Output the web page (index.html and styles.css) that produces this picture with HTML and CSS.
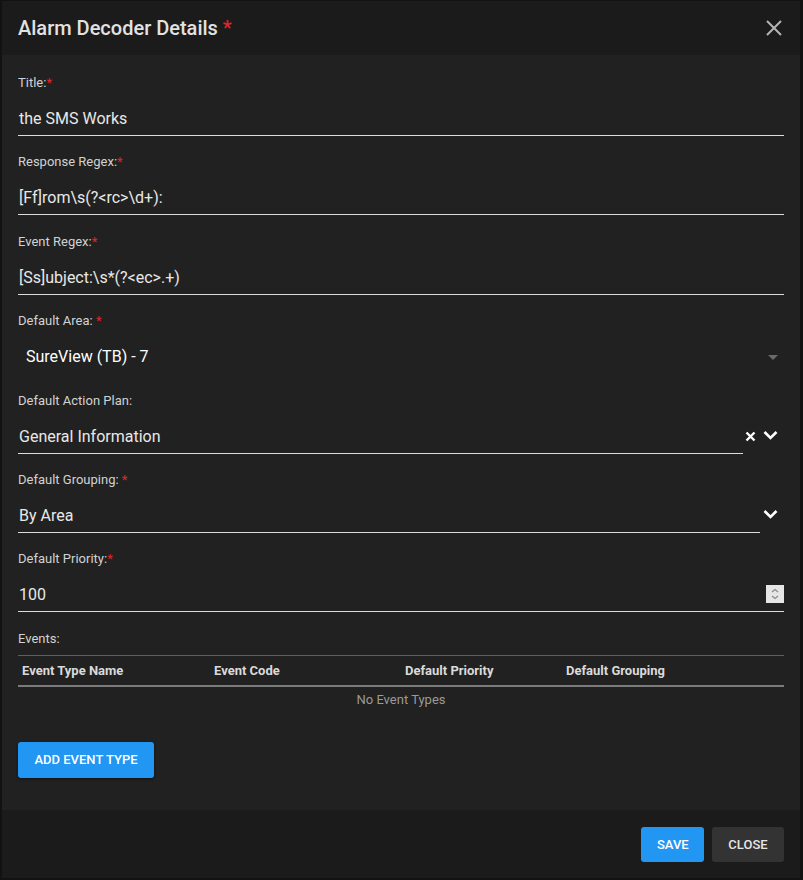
FILE: index.html
```html
<!DOCTYPE html>
<html>
<head>
<meta charset="utf-8">
<link rel="stylesheet" href="styles.css">
</head>
<body>
<div class="modal">
  <div class="header">
    <div class="title">Alarm Decoder Details <span class="req">*</span></div>
    <svg class="close-x" width="16" height="16" viewBox="0 0 16 16"><path d="M1 1L15 15M15 1L1 15" stroke="#b5b5b5" stroke-width="2" fill="none"/></svg>
  </div>
  <div class="body">
    <div class="field">
      <div class="label">Title:<span class="req">*</span></div>
      <div class="input"><span class="value">the SMS Works</span></div>
    </div>
    <div class="field">
      <div class="label">Response Regex:<span class="req">*</span></div>
      <div class="input"><span class="value">[Ff]rom\s(?&lt;rc&gt;\d+):</span></div>
    </div>
    <div class="field">
      <div class="label">Event Regex:<span class="req">*</span></div>
      <div class="input"><span class="value">[Ss]ubject:\s*(?&lt;ec&gt;.+)</span></div>
    </div>
    <div class="field">
      <div class="label">Default Area: <span class="req">*</span></div>
      <div class="input select-native"><span class="area">SureView (TB) - 7</span><span class="tri"></span></div>
    </div>
    <div class="field">
      <div class="label">Default Action Plan:</div>
      <div class="combo">
        <div class="input grow"><span class="value">General Information</span></div>
        <svg class="clear" width="11" height="11" viewBox="0 0 11 11"><path d="M1.5 1.5L9.5 9.5M9.5 1.5L1.5 9.5" stroke="#fff" stroke-width="2.4" fill="none"/></svg>
        <svg class="chev" width="15" height="10" viewBox="0 0 15 10"><path d="M1.5 2L7.5 8L13.5 2" stroke="#fff" stroke-width="2.6" fill="none"/></svg>
      </div>
    </div>
    <div class="field">
      <div class="label">Default Grouping: <span class="req">*</span></div>
      <div class="combo">
        <div class="input grow"><span class="value">By Area</span></div>
        <svg class="chev solo" width="15" height="10" viewBox="0 0 15 10"><path d="M1.5 2L7.5 8L13.5 2" stroke="#fff" stroke-width="2.6" fill="none"/></svg>
      </div>
    </div>
    <div class="field">
      <div class="label">Default Priority:<span class="req">*</span></div>
      <div class="input"><span class="value">100</span>
        <span class="spin"><svg width="18" height="18" viewBox="0 0 18 18"><path d="M6 7L9 4.5L12 7M6 11L9 13.5L12 11" stroke="#8a8a8a" stroke-width="1.2" fill="none"/></svg></span>
      </div>
    </div>
    <div class="label events-label">Events:</div>
    <div class="table">
      <div class="thead">
        <div class="th">Event Type Name</div>
        <div class="th">Event Code</div>
        <div class="th">Default Priority</div>
        <div class="th">Default Grouping</div>
      </div>
      <div class="empty">No Event Types</div>
    </div>
    <button class="btn primary add">ADD EVENT TYPE</button>
  </div>
  <div class="footer">
    <button class="btn primary">SAVE</button>
    <button class="btn dark">CLOSE</button>
  </div>
</div>
</body>
</html>
```
FILE: styles.css
```css
html, body {
  margin: 0;
  padding: 0;
  background: #121212;
  font-family: Roboto, "Liberation Sans", sans-serif;
}
.modal {
  margin: 1px 3px 2px 2px;
  height: 877px;
  display: flex;
  flex-direction: column;
  background: #212121;
  box-sizing: border-box;
}
.header {
  height: 54px;
  flex: none;
  background: #1b1b1b;
  display: flex;
  align-items: center;
  justify-content: space-between;
  padding: 0 18px 0 16px;
}
.title {
  font-size: 20px;
  font-weight: 500;
  color: #e2e2e2;
  letter-spacing: 0;
}
.req {
  color: #e0262b;
}
.body {
  flex: 1;
  padding: 20px 16px 0 16px;
  display: flex;
  flex-direction: column;
}
.field {
  margin-bottom: 18.4px;
}
.label {
  font-size: 13px;
  line-height: 16px;
  color: #d2d2d2;
  height: 16px;
}
.input {
  margin-top: 10px;
  height: 34px;
  border-bottom: 1px solid #dcdcdc;
  display: flex;
  align-items: center;
  position: relative;
}
.value {
  font-size: 16px;
  color: #e8e8e8;
  padding-top: 1px;
  padding-left: 1px;
}
.select-native {
  border-bottom-color: transparent;
  justify-content: space-between;
}
.area {
  font-size: 16px;
  padding-top: 1px;
  padding-left: 8px;
  color: #fff;
}
.tri {
  width: 0;
  height: 0;
  border-left: 5px solid transparent;
  border-right: 5px solid transparent;
  border-top: 5px solid #6b6b6b;
  margin-right: 6px;
  margin-top: 3px;
}
.combo {
  display: flex;
  align-items: center;
}
.combo .input {
  flex: 1;
}
.clear {
  margin: 10px 0 0 2px;
}
.chev {
  margin: 7px 6px 0 7px;
}
.chev.solo {
  margin: 7px 6px 0 3px;
}
.spin {
  position: absolute;
  right: 0;
  top: 8px;
  width: 18px;
  height: 18px;
  background: #e6e6e6;
  display: flex;
}
.events-label {
  margin-bottom: 8px;
}
.table {
  border-top: 1px solid #5f5f5f;
}
.thead {
  display: grid;
  grid-template-columns: 192px 191px 161px 1fr;
  height: 29px;
  align-items: center;
  border-bottom: 2px solid #7a7a7a;
}
.th {
  font-size: 13px;
  font-weight: 700;
  color: #dadada;
  padding-left: 4px;
}
.empty {
  text-align: center;
  font-size: 13px;
  color: #9a9a9a;
  height: 26px;
  line-height: 26px;
}
.btn {
  border: none;
  border-radius: 3px;
  font-family: Roboto, "Liberation Sans", sans-serif;
  font-size: 13px;
  font-weight: 500;
  color: #fff;
  cursor: pointer;
  letter-spacing: 0;
}
.primary {
  background: #2196f3;
}
.dark {
  background: #333333;
  color: #e6e6e6;
}
.add {
  align-self: flex-start;
  margin-top: 29px;
  height: 36px;
  width: 136px;
  box-shadow: 0 1px 3px rgba(0,0,0,0.5);
}
.footer {
  flex: none;
  height: 68px;
  background: #1b1b1b;
  display: flex;
  justify-content: flex-end;
  align-items: center;
  gap: 8px;
  padding: 0 16px;
}
.footer .btn {
  height: 35px;
  padding: 0 16px;
}
.footer .primary {
  width: 63px;
}
.footer .dark {
  width: 72px;
}
```
